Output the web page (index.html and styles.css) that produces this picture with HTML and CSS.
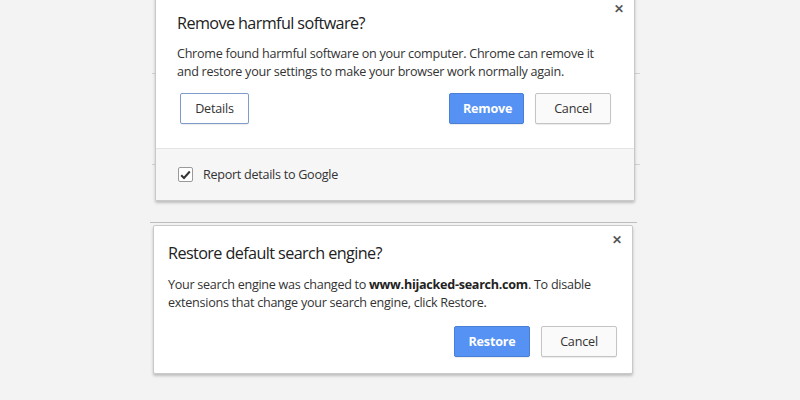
FILE: index.html
```html
<!DOCTYPE html>
<html>
<head>
<meta charset="utf-8">
<link rel="stylesheet" href="styles.css">
</head>
<body>
<div class="page">
  <div class="stack">
    <div class="backdrop"><div class="bline l1"></div><div class="bline l2"></div></div>
    <div class="dialog d1">
      <div class="main">
        <div class="head">
          <div class="title">Remove harmful software?</div>
          <div class="close">&#x2715;</div>
        </div>
        <p class="body">Chrome found harmful software on your computer. Chrome can remove it and restore your settings to make your browser work normally again.</p>
        <div class="actions">
          <button class="btn focus">Details</button>
          <div class="spacer"></div>
          <button class="btn primary">Remove</button>
          <button class="btn">Cancel</button>
        </div>
      </div>
      <div class="footer">
        <span class="check"><svg width="11" height="10" viewBox="0 0 11 10"><path d="M1.2 5.2 L4 8 L9.8 1.5" fill="none" stroke="#333" stroke-width="2"/></svg></span>
        <span class="label">Report details to Google</span>
      </div>
    </div>
  </div>
  <div class="rule"></div>
  <div class="dialog d2">
    <div class="main">
      <div class="head">
        <div class="title">Restore default search engine?</div>
        <div class="close">&#x2715;</div>
      </div>
      <p class="body">Your search engine was changed to <b>www.hijacked-search.com</b>. To disable extensions that change your search engine, click Restore.</p>
      <div class="actions">
        <div class="spacer"></div>
        <button class="btn primary">Restore</button>
        <button class="btn">Cancel</button>
      </div>
    </div>
  </div>
</div>
</body>
</html>
```

FILE: styles.css
```css
html, body {
  margin: 0;
  padding: 0;
  background: #f3f3f3;
  width: 800px;
  height: 400px;
  overflow: hidden;
  font-family: "Open Sans", "Noto Sans", sans-serif;
  color: #333;
}
.page {
  padding-left: 150px;
  width: 490px;
}
.stack {
  position: relative;
  margin-top: -6px;
  padding-left: 5px;
}
.backdrop {
  position: absolute;
  left: 0;
  top: 0;
  width: 490px;
  height: 206px;
}
.bline {
  position: absolute;
  left: 2px;
  right: 0;
  height: 1px;
  background: #d2d2d2;
}
.l1 { top: 79px; }
.l2 { top: 170px; }
.dialog {
  position: relative;
  width: 478px;
  background: #fff;
  border: 1px solid #c9c9c9;
  border-radius: 2px;
  box-shadow: 0 2px 3px rgba(0,0,0,0.22);
}
.main {
  padding: 0 23px 0 21px;
}
.d1 .main { padding-bottom: 24px; }
.head {
  display: flex;
  justify-content: space-between;
  align-items: flex-start;
}
.title {
  font-size: 16.2px;
  color: #222;
  margin-top: 17px;
  letter-spacing: -0.6px;
}
.close {
  font-size: 11.5px;
  font-weight: bold;
  color: #555;
  margin-top: 6px;
  margin-right: -13px;
}
.body {
  margin: 11px 0 0;
  font-size: 12.6px;
  line-height: 18px;
  color: #333;
  letter-spacing: -0.28px;
}
.body b { color: #222; }
.actions {
  display: flex;
  gap: 11px;
  margin-top: 12px;
  padding-left: 3px;
  padding-right: 0;
}
.spacer { flex: 1; }
.btn {
  font-family: inherit;
  font-size: 12.6px;
  color: #333;
  height: 31px;
  min-width: 69px;
  padding: 0 13px;
  background: #fafafa;
  border: 1px solid #c4c4c4;
  border-radius: 2px;
  box-shadow: 0 1px 1px rgba(0,0,0,0.08);
  letter-spacing: -0.2px;
}
.btn.focus {
  background: #fff;
  border-color: #7f9ccb;
}
.btn.primary {
  background: #5592f3;
  border-color: #4a7fd6;
  color: #fff;
  font-weight: bold;
  width: 75px;
}
.d1 .btn:not(.primary):last-child { width: 76px; }
.footer {
  display: flex;
  align-items: center;
  height: 51px;
  border-top: 1px solid #e4e4e4;
  background: #f6f6f6;
  padding-left: 22px;
}
.check {
  display: flex;
  align-items: center;
  justify-content: center;
  width: 13px;
  height: 13px;
  border: 1px solid #9a9a9a;
  border-radius: 2px;
  background: #fff;
}
.label {
  margin-left: 10px;
  font-size: 12.6px;
  color: #333;
  letter-spacing: -0.28px;
}
.rule {
  height: 1px;
  background: #bdbdbd;
  margin-top: 21px;
  width: 487px;
}
.d2 {
  margin-top: 2px;
  margin-left: 3px;
}
.d2 .main { padding: 0 15px 16px 14px; }
.d2 .close { margin-right: -5px; margin-top: 6px; }
.d2 .title { margin-top: 16px; }
.d2 .body { margin-top: 12px; }
.d2 .actions { margin-top: 14px; }
.d2 .btn { width: 76px; }
```
